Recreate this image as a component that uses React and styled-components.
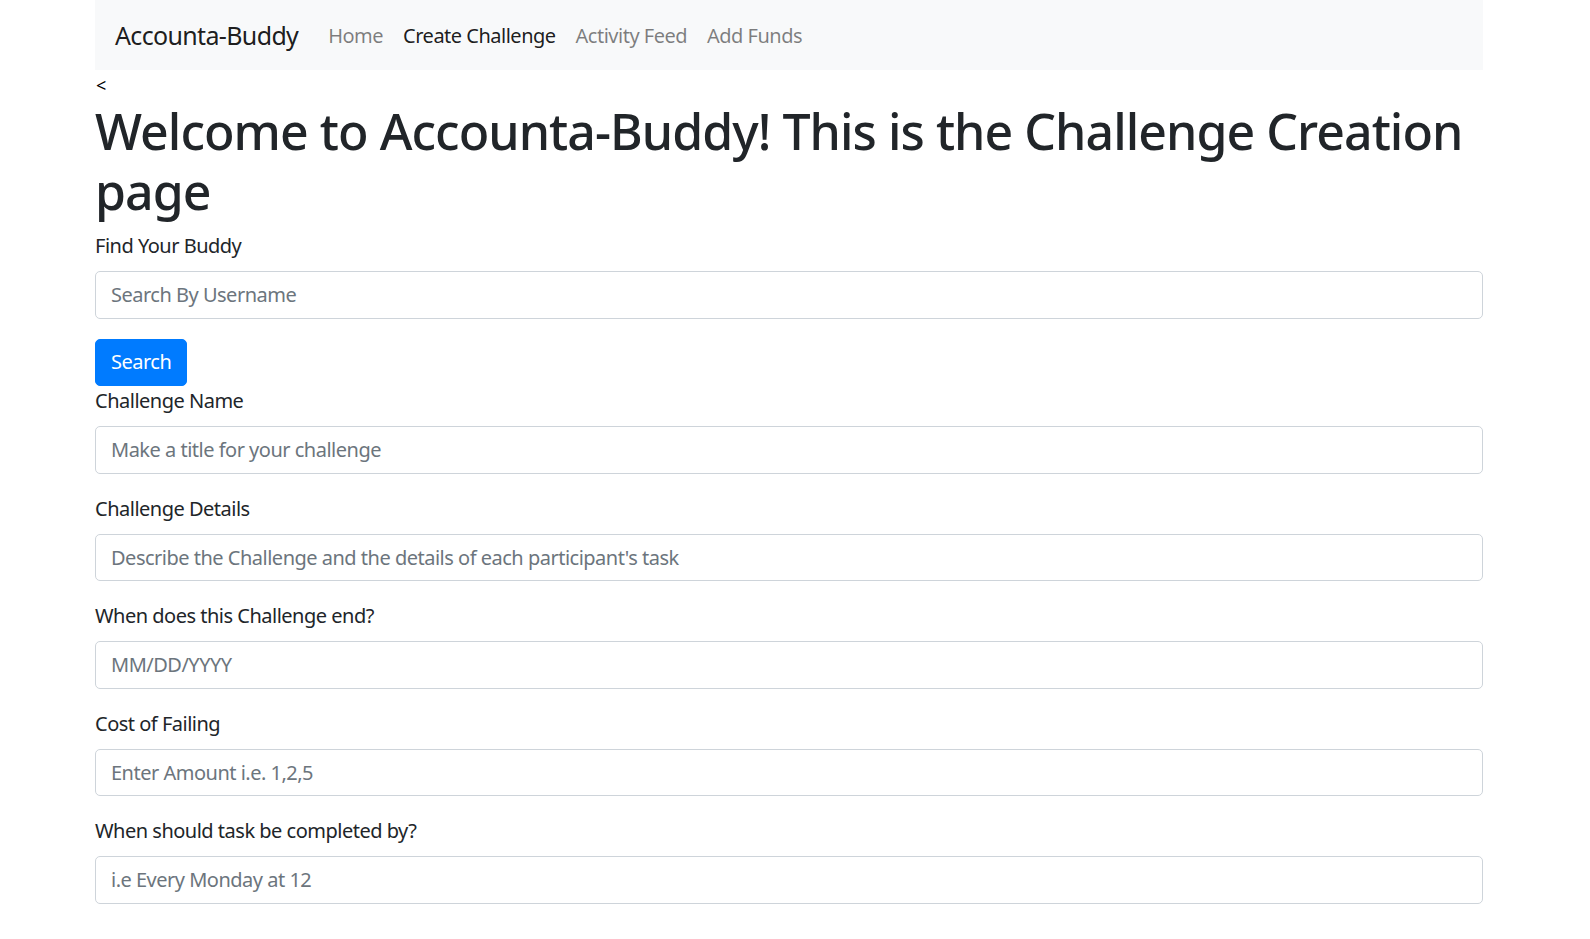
import React from "react";
import styled, { createGlobalStyle } from "styled-components";

const Global = createGlobalStyle`
  * { box-sizing: border-box; }
  html, body { margin: 0; padding: 0; background: #fff; }
  body {
    font-family: "Noto Sans", "Open Sans", sans-serif;
    font-size: 20px;
    line-height: 1.5;
    color: #212529;
  }
`;

const Container = styled.div`
  width: 1388px;
  margin-left: 95px;
`;

const Navbar = styled.nav`
  display: flex;
  align-items: center;
  background: #f8f9fa;
  padding: 11px 20px 9px;
  height: 70px;
`;

const Brand = styled.a`
  font-size: 25px;
  line-height: 37.5px;
  letter-spacing: -0.026em;
  padding: 6.25px 0;
  margin-right: 20px;
  color: rgba(0, 0, 0, 0.9);
  text-decoration: none;
  white-space: nowrap;
`;

const NavList = styled.div`
  display: flex;
`;

const NavLink = styled.a`
  padding: 10px 10px;
  letter-spacing: -0.025em;
  color: ${(p) => (p.$active ? "rgba(0,0,0,0.9)" : "rgba(0,0,0,0.5)")};
  text-decoration: none;
  white-space: nowrap;
`;

const Back = styled.div`
  font-size: 18px;
  line-height: 31px;
  height: 31px;
  padding-left: 1px;
  color: #000;
`;

const Title = styled.h1`
  margin: 0 0 10px;
  font-size: 50px;
  font-weight: 500;
  line-height: 1.2;
  letter-spacing: -0.019em;
`;

const Group = styled.div`
  margin-bottom: ${(p) => (p.$tight ? "0" : "20px")};
  display: flex;
  flex-direction: column;
`;

const Label = styled.label`
  display: block;
  margin-bottom: 10px;
  letter-spacing: -0.025em;
`;

const Input = styled.input`
  display: block;
  width: 100%;
  height: 47.5px;
  padding: 7.5px 15px;
  font: inherit;
  font-size: 20px;
  line-height: 30px;
  letter-spacing: -0.025em;
  color: #495057;
  background: #fff;
  border: 1px solid #ced4da;
  border-radius: 5px;
  outline: none;
  &::placeholder { color: #6c757d; opacity: 1; }
`;

const Button = styled.button`
  align-self: flex-start;
  height: 47.5px;
  padding: 7.5px 15px;
  font: inherit;
  font-size: 20px;
  line-height: 30px;
  letter-spacing: -0.025em;
  color: #fff;
  background: #007bff;
  border: 1px solid #007bff;
  border-radius: 5px;
  cursor: pointer;
`;

const fields = [
  ["Challenge Name", "Make a title for your challenge"],
  ["Challenge Details", "Describe the Challenge and the details of each participant's task"],
  ["When does this Challenge end?", "MM/DD/YYYY"],
  ["Cost of Failing", "Enter Amount i.e. 1,2,5"],
  ["When should task be completed by?", "i.e Every Monday at 12"],
];

export default function App() {
  return (
    <>
      <Global />
      <Container>
        <Navbar>
          <Brand href="#">Accounta-Buddy</Brand>
          <NavList>
            <NavLink href="#">Home</NavLink>
            <NavLink href="#" $active>Create Challenge</NavLink>
            <NavLink href="#">Activity Feed</NavLink>
            <NavLink href="#">Add Funds</NavLink>
          </NavList>
        </Navbar>
        <Back>&lt;</Back>
        <Title>Welcome to Accounta-Buddy! This is the Challenge Creation page</Title>
        <Group>
          <Label>Find Your Buddy</Label>
          <Input placeholder="Search By Username" />
        </Group>
        <Group $tight>
          <Button>Search</Button>
        </Group>
        {fields.map(([label, ph]) => (
          <Group key={label}>
            <Label>{label}</Label>
            <Input placeholder={ph} />
          </Group>
        ))}
      </Container>
    </>
  );
}
